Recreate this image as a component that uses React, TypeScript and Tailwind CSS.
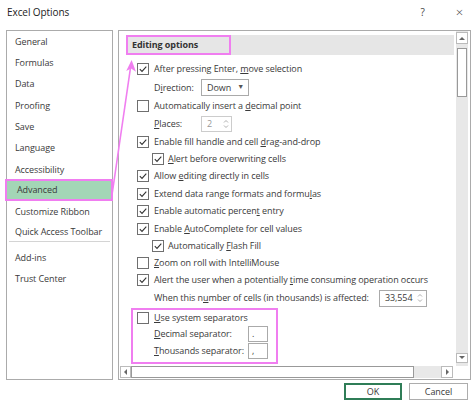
import React from 'react';

const PINK = 'border-[#f07ef0]';

function Check({ on = true }: { on?: boolean }) {
  return (
    <span className="w-[12px] h-[12px] border border-[#6f6f6f] bg-white flex items-center justify-center shrink-0">
      {on && (
        <svg width="10" height="10" viewBox="0 0 10 10">
          <path d="M1.8 5.2 L4 7.4 L8.3 2.6" fill="none" stroke="#333" strokeWidth="1.1" />
        </svg>
      )}
    </span>
  );
}

function CheckRow({ on = true, indent = false, h = 17, children }: { on?: boolean; indent?: boolean; h?: number; children: React.ReactNode }) {
  return (
    <div className={`flex items-center ${indent ? 'pl-[26px] gap-[4px]' : 'pl-[11px] gap-[5px]'}`} style={{ height: h }}>
      <Check on={on} />
      <span className="whitespace-nowrap">{children}</span>
    </div>
  );
}

function Spin() {
  return (
    <svg width="6" height="10" viewBox="0 0 6 10" className="shrink-0">
      <path d="M1 3.5 L3 1.5 L5 3.5" fill="none" stroke="#999" strokeWidth="0.8" />
      <path d="M1 6.5 L3 8.5 L5 6.5" fill="none" stroke="#999" strokeWidth="0.8" />
    </svg>
  );
}

const menu = ['General', 'Formulas', 'Data', 'Proofing', 'Save', 'Language', 'Accessibility'];

export default function App() {
  return (
    <div
      className="w-[474px] h-[407px] bg-white relative overflow-hidden text-[#3a3a3a] text-[9px] tracking-[-0.08px]"
      style={{ fontFamily: '"Open Sans", "Noto Sans", sans-serif' }}
    >
      {/* title bar */}
      <div className="h-[25px] flex items-center pl-[7px] pr-[11px]">
        <span className="text-[10px] text-[#222]">Excel Options</span>
        <span className="ml-auto text-[10px] text-[#444]">?</span>
        <span className="ml-[31px] text-[13px] text-[#444] font-light leading-none">×</span>
      </div>

      <div className="flex pt-[5px] pl-[6px] gap-[5px]">
        {/* category list */}
        <div className="w-[107px] h-[350px] border border-[#ababab]">
          {menu.map((m) => (
            <div key={m} className="h-[21.3px] flex items-center pl-[8px]">{m}</div>
          ))}
          <div className="h-[22px] -mt-[1px] -ml-[2px] w-[108px] flex items-center pl-[10px] bg-[#a3d6b6] border-2 border-[#f07ef0]">
            Advanced
          </div>
          <div className="h-[21.3px] flex items-center pl-[8px]">Customize Ribbon</div>
          <div className="h-[19px] flex items-center pl-[8px]">Quick Access Toolbar</div>
          <div className="mx-[2px] mb-[5px] h-px bg-[#d4d4d4]" />
          <div className="h-[21px] flex items-center pl-[8px]">Add-ins</div>
          <div className="h-[21px] flex items-center pl-[8px]">Trust Center</div>
        </div>

        {/* settings pane */}
        <div className="w-[353px] h-[350px] border border-[#ababab] flex flex-col">
          <div className="flex flex-1 min-h-0">
            <div className="flex-1 pt-[4px] pl-[7px] pr-[2px] overflow-hidden">
              <div className="relative h-[20px] bg-[#e6e6e6] flex items-center pl-[6px] font-bold text-[#333]">
                Editing options
                <div className={`absolute left-0 top-0 w-[105px] h-[20px] border-2 ${PINK}`} />
              </div>
              <div className="mt-[5px]">
                <CheckRow h={18}>After pressing Enter, <u>m</u>ove selection</CheckRow>
                <div className="h-[19px] flex items-center pl-[28px]">
                  <span className="w-[47px]">D<u>i</u>rection:</span>
                  <div className="w-[48px] h-[17px] border border-[#aaa] flex items-center pl-[5px] pr-[4px]">
                    <span>Down</span>
                    <span className="ml-auto text-[7px] text-[#555]">▼</span>
                  </div>
                </div>
                <CheckRow on={false}>Automatically insert a <u>d</u>ecimal point</CheckRow>
                <div className="h-[19px] flex items-center pl-[28px]">
                  <span className="w-[47px]"><u>P</u>laces:</span>
                  <div className="w-[31px] h-[16px] border border-[#ccc] flex items-center pl-[5px] pr-[2px] text-[#999]">
                    <span>2</span>
                    <span className="ml-auto"><Spin /></span>
                  </div>
                </div>
                <CheckRow>Enable fill handle and cell <u>d</u>rag-and-drop</CheckRow>
                <CheckRow indent><u>A</u>lert before overwriting cells</CheckRow>
                <CheckRow h={17.5}>Allow <u>e</u>diting directly in cells</CheckRow>
                <CheckRow h={18}>Extend data range formats and formu<u>l</u>as</CheckRow>
                <CheckRow>Enable automatic percen<u>t</u> entry</CheckRow>
                <CheckRow h={18}>Enable <u>A</u>utoComplete for cell values</CheckRow>
                <CheckRow indent>Automatically <u>F</u>lash Fill</CheckRow>
                <CheckRow on={false}><u>Z</u>oom on roll with IntelliMouse</CheckRow>
                <CheckRow>Alert the user when a potentially <u>t</u>ime consuming operation occurs</CheckRow>
                <div className="h-[19px] flex items-center pl-[28px]">
                  <span className="whitespace-nowrap">When this n<u>u</u>mber of cells (in thousands) is affected:</span>
                  <div className="ml-[10px] w-[48px] h-[17px] border border-[#aaa] flex items-center pl-[5px] pr-[3px]">
                    <span>33,554</span>
                    <span className="ml-auto"><Spin /></span>
                  </div>
                </div>
                <div className={`ml-[5px] w-[147px] border-2 ${PINK} pl-[4px] pb-[2px]`}>
                  <div className="h-[16px] flex items-center gap-[5px]">
                    <Check on={false} />
                    <span><u>U</u>se system separators</span>
                  </div>
                  <div className="h-[17px] flex items-center pl-[17px]">
                    <span className="w-[94px]"><u>D</u>ecimal separator:</span>
                    <div className="w-[20px] h-[16px] border border-[#aaa] pl-[3px] leading-[13px]">.</div>
                  </div>
                  <div className="h-[17px] flex items-center pl-[17px]">
                    <span className="w-[94px]"><u>T</u>housands separator:</span>
                    <div className="w-[20px] h-[16px] border border-[#aaa] pl-[3px] leading-[13px]">,</div>
                  </div>
                </div>
              </div>
            </div>

            {/* vertical scrollbar */}
            <div className="w-[12px] mr-[2px] bg-[#e8e8e8] flex flex-col pt-[1px]">
              <div className="h-[12px] border border-[#bbb] bg-white flex items-center justify-center">
                <svg width="6" height="4" viewBox="0 0 6 4"><path d="M0 4 L3 1 L6 4 Z" fill="#666" /></svg>
              </div>
              <div className="mt-[4px] h-[49px] mx-[1px] border border-[#999] bg-white" />
              <div className="mt-auto mb-[3px] h-[10px] border border-[#bbb] bg-white flex items-center justify-center">
                <svg width="6" height="4" viewBox="0 0 6 4"><path d="M0 0 L3 3 L6 0 Z" fill="#666" /></svg>
              </div>
            </div>
          </div>

          {/* horizontal scrollbar */}
          <div className="h-[12px] mb-[1px] flex pl-[1px]">
            <div className="w-[11px] border border-[#bbb] flex items-center justify-center">
              <svg width="4" height="6" viewBox="0 0 4 6"><path d="M3 0 L0 3 L3 6 Z" fill="#666" /></svg>
            </div>
            <div className="w-[283px] border border-[#999] bg-white" />
            <div className="flex-1 bg-[#e8e8e8]" />
            <div className="w-[12px] border border-[#bbb] flex items-center justify-center">
              <svg width="4" height="6" viewBox="0 0 4 6"><path d="M1 0 L4 3 L1 6 Z" fill="#666" /></svg>
            </div>
            <div className="w-[17px]" />
          </div>
        </div>
      </div>

      {/* buttons */}
      <div className="flex justify-end gap-[7px] pr-[6px] mt-[3px]">
        <button className="w-[58px] h-[17px] border-2 border-[#2f7d57] bg-white text-[9px] leading-none">OK</button>
        <button className="w-[59px] h-[17px] border border-[#adadad] bg-white text-[9px] leading-none">Cancel</button>
      </div>

      {/* annotation arrow */}
      <svg className="absolute inset-0 pointer-events-none" width="474" height="407" viewBox="0 0 474 407">
        <line x1="112" y1="195" x2="130.6" y2="67" stroke="#f07ef0" strokeWidth="1.6" />
        <path d="M131.6 60 L126.2 71 L131 68.5 L136 71.8 Z" fill="#f07ef0" />
      </svg>
    </div>
  );
}
